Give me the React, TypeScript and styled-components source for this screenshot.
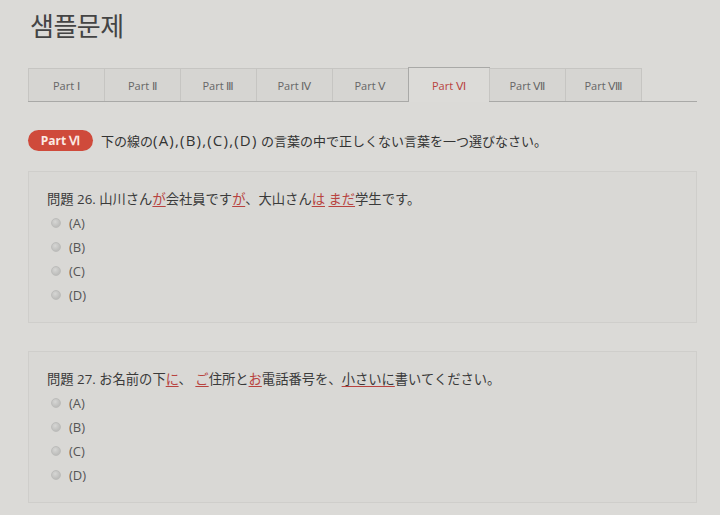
import React from "react";
import styled, { createGlobalStyle } from "styled-components";

const Global = createGlobalStyle`
  html, body { margin: 0; padding: 0; background: #dbdad7; }
  body { font-family: "Open Sans", "Noto Sans CJK JP", sans-serif; color: #3a3a3a; }
`;

const Page = styled.div`
  width: 720px;
  height: 515px;
  overflow: hidden;
  padding: 0 23px 0 28px;
  box-sizing: border-box;
  background: #dbdad7;
`;

const Title = styled.h1`
  margin: 0;
  padding: 8px 0 0 2px;
  height: 60px;
  box-sizing: border-box;
  font-family: "Noto Sans CJK KR", sans-serif;
  font-weight: 400;
  font-size: 26px;
  line-height: 34px;
  color: #444;
  letter-spacing: -0.5px;
`;

const TabBar = styled.div`
  display: flex;
  align-items: flex-end;
  height: 42px;
  box-sizing: border-box;
  border-bottom: 1px solid #a9a9a7;
  margin-top: 0;
`;

const Tab = styled.div<{ $active?: boolean }>`
  width: ${(p) => (p.$active ? 82 : 77)}px;
  height: ${(p) => (p.$active ? 35 : 33)}px;
  box-sizing: border-box;
  display: flex;
  align-items: center;
  justify-content: center;
  font-family: "Open Sans", sans-serif;
  font-size: 11px;
  color: ${(p) => (p.$active ? "#b8433f" : "#666")};
  background: ${(p) => (p.$active ? "#dcdbd8" : "#d6d5d2")};
  border: 1px solid ${(p) => (p.$active ? "#a9a9a7" : "#c6c5c2")};
  border-bottom: none;
  margin-bottom: ${(p) => (p.$active ? "-1px" : "0")};
  & + & { margin-left: -1px; }
`;

const Instruction = styled.div`
  display: flex;
  align-items: center;
  gap: 8px;
  margin-top: 27px;
  height: 22px;
  font-family: "Open Sans", "Noto Sans CJK JP", sans-serif;
  font-size: 13px;
  color: #333;
`;

const Latin = styled.span`
  letter-spacing: 1.2px;
  font-size: 15px;
`;

const Badge = styled.span`
  display: inline-flex;
  align-items: center;
  justify-content: center;
  width: 65px;
  height: 21px;
  border-radius: 11px;
  background: #cf4a3b;
  color: #fbe9e4;
  font-family: "Open Sans", sans-serif;
  font-weight: 700;
  font-size: 12px;
`;

const Card = styled.div<{ $top: number }>`
  margin-top: ${(p) => p.$top}px;
  border: 1px solid #cfcecb;
  padding: 17px 18px 14px 18px;
  height: 152px;
  box-sizing: border-box;
  background: #d9d8d5;
`;

const Question = styled.div`
  font-family: "Open Sans", "Noto Sans CJK JP", sans-serif;
  font-size: 13.3px;
  color: #3a3a3a;
  line-height: 20px;
  margin-bottom: 5px;
`;

const Mark = styled.span`
  color: #b8433f;
  text-decoration: underline;
  text-decoration-color: #b8433f;
  text-underline-offset: 2px;
`;

const DarkMark = styled.span`
  text-decoration: underline;
  text-decoration-color: #b8433f;
  text-underline-offset: 2px;
`;

const Options = styled.div`
  display: flex;
  flex-direction: column;
  gap: 6px;
  padding-left: 4px;
`;

const Option = styled.label`
  display: flex;
  align-items: center;
  gap: 8px;
  height: 18px;
  font-family: "Open Sans", sans-serif;
  font-size: 13px;
  color: #555;
`;

const Radio = styled.span`
  width: 10px;
  height: 10px;
  border-radius: 50%;
  background: radial-gradient(circle at 40% 35%, #d6d6d4, #b3b3b1);
  border: 1px solid #bdbdbb;
  box-sizing: border-box;
`;

const tabs = ["Part Ⅰ", "Part Ⅱ", "Part Ⅲ", "Part Ⅳ", "Part Ⅴ", "Part Ⅵ", "Part Ⅶ", "Part Ⅷ"];
const opts = ["(A)", "(B)", "(C)", "(D)"];

function OptionList() {
  return (
    <Options>
      {opts.map((o) => (
        <Option key={o}>
          <Radio />
          {o}
        </Option>
      ))}
    </Options>
  );
}

export default function App() {
  return (
    <Page>
      <Global />
      <Title>샘플문제</Title>
      <TabBar>
        {tabs.map((t, i) => (
          <Tab key={t} $active={i === 5}>
            {t}
          </Tab>
        ))}
      </TabBar>
      <Instruction>
        <Badge>Part Ⅵ</Badge>
        <span>
          下の線の<Latin>(A),(B),(C),(D)</Latin> の言葉の中で正しくない言葉を一つ選びなさい。
        </span>
      </Instruction>
      <Card $top={20}>
        <Question>
          問題 26. 山川さん<Mark>が</Mark>会社員です<Mark>が</Mark>、大山さん<Mark>は</Mark> <Mark>まだ</Mark>学生です。
        </Question>
        <OptionList />
      </Card>
      <Card $top={28}>
        <Question>
          問題 27. お名前の下<Mark>に</Mark>、 <Mark>ご</Mark>住所と<Mark>お</Mark>電話番号を、<DarkMark>小さいに</DarkMark>書いてください。
        </Question>
        <OptionList />
      </Card>
    </Page>
  );
}
